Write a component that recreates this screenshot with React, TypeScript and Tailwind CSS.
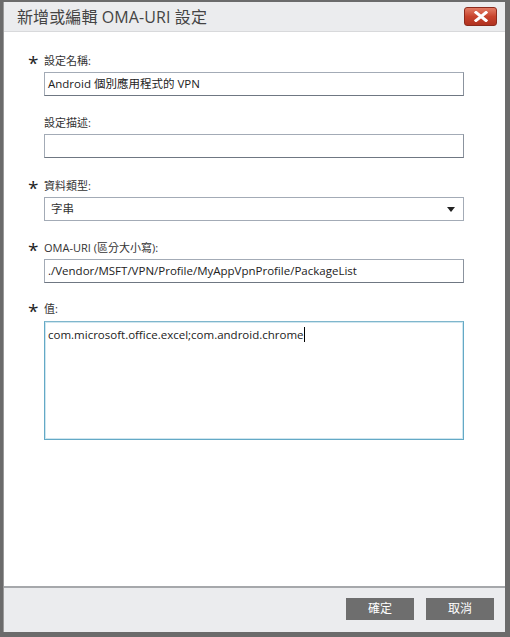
const font = { fontFamily: '"Open Sans", "Noto Sans CJK TC", sans-serif' };

const Label = ({ text, required }: { text: string; required?: boolean }) => (
  <div className="flex items-center h-[16px] overflow-visible">
    <span className="w-[16px] text-[19px] leading-none text-[#222] relative top-[3px]">{required ? "*" : ""}</span>
    <span className="text-[11px] leading-none text-[#333]">{text}</span>
  </div>
);

const Input = ({ value }: { value: string }) => (
  <div className="ml-[16px] h-[24px] border border-[#a3abb6] border-b-[#6f7782] border-r-[#8b939e] bg-white px-[3px] flex items-center text-[11.5px] text-[#222] whitespace-nowrap">
    {value}
  </div>
);

export default function App() {
  return (
    <div className="w-[510px] h-[637px] bg-[#6b6b6b] pt-[2px] pl-[3px] pr-[5px] pb-[5px]" style={font}>
      <div className="h-full flex flex-col bg-white border-l border-[#9a9a9a]">
        <div className="h-[30px] bg-[#ebecee] border-b border-[#d8d9db] flex items-center justify-between pl-[13px] pr-[8px]">
          <span className="text-[16px] text-[#444] tracking-[0.1px]">新增或編輯 OMA-URI 設定</span>
          <button className="w-[33px] h-[19px] rounded-[3px] border border-[#8c2a1c] bg-gradient-to-b from-[#e27c66] via-[#c8432c] to-[#b03220] flex items-center justify-center">
            <svg width="14" height="11" viewBox="0 0 14 11">
              <path d="M2 1.5 L12 9.5 M12 1.5 L2 9.5" stroke="white" strokeWidth="3" strokeLinecap="square" />
            </svg>
          </button>
        </div>
        <div className="flex-1 pl-[24px] pr-[41px] pt-[20px]">
          <Label text="設定名稱:" required />
          <div className="mt-[4px]">
            <Input value="Android 個別應用程式的 VPN" />
          </div>
          <div className="mt-[18px]">
            <Label text="設定描述:" />
          </div>
          <div className="mt-[4px]">
            <Input value="" />
          </div>
          <div className="mt-[19px]">
            <Label text="資料類型:" required />
          </div>
          <div className="mt-[4px] ml-[16px] h-[24px] border border-[#a3abb6] bg-white pl-[6px] pr-[8px] flex items-center justify-between text-[11.5px] text-[#333]">
            <span>字串</span>
            <svg width="8" height="5" viewBox="0 0 8 5">
              <path d="M0 0 H8 L4 5 Z" fill="#222" />
            </svg>
          </div>
          <div className="mt-[18px]">
            <Label text="OMA-URI (區分大小寫):" required />
          </div>
          <div className="mt-[4px]">
            <Input value="./Vendor/MSFT/VPN/Profile/MyAppVpnProfile/PackageList" />
          </div>
          <div className="mt-[17px]">
            <Label text="值:" required />
          </div>
          <div className="mt-[5px] ml-[16px] h-[119px] border border-[#63a9c6] border-t-[#7fb6cc] shadow-[inset_0_0_0_1px_#cfe6ef] bg-white px-[3px] pt-[4px] text-[11.5px] text-[#222]">
            com.microsoft.office.excel;com.android.chrome
            <span className="inline-block w-[1px] h-[15px] bg-black align-[-3px]" />
          </div>
        </div>
        <div className="h-[46px] bg-[#ebecee] border-t-2 border-[#a6a8ab] flex items-center justify-end gap-[12px] pr-[11px] pb-[2px]">
          <button className="w-[68px] h-[22px] bg-[#6e6e6e] text-white text-[12px]">確定</button>
          <button className="w-[68px] h-[22px] bg-[#6e6e6e] text-white text-[12px]">取消</button>
        </div>
      </div>
    </div>
  );
}
